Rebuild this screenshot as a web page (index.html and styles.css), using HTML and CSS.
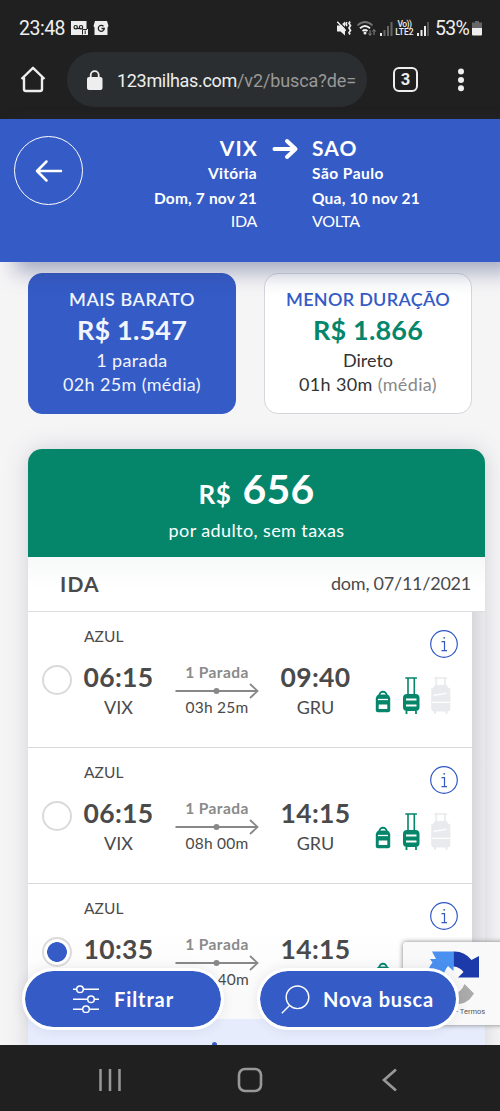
FILE: index.html
```
<!DOCTYPE html>
<html lang="pt-BR">
<head>
<meta charset="utf-8">
<title>123milhas</title>
<link rel="stylesheet" href="styles.css">
</head>
<body>
<svg width="0" height="0" class="defs">
  <symbol id="bags" viewBox="0 0 76 38">
    <g fill="#05866b">
      <path d="M4.300 19.500a3.700 3.700 0 0 1 7.400 0" fill="none" stroke="#05866b" stroke-width="1.900"/>
      <path d="M0.800 22.500Q1.400 18.500 5 18.500h6q3.600 0 4.200 4v11.700q0 2-2 2H2.800q-2 0-2-2z"/>
      <path d="M3 23.500h10" stroke="#fff" stroke-width="1.300"/>
      <path d="M3.700 28.500h8.600v4.500H3.700z" fill="#fff"/>
      <path d="M30.300 2h11.600M33 2v16M39.300 2v16" fill="none" stroke="#05866b" stroke-width="1.600"/>
      <rect x="28" y="18" width="16.500" height="17" rx="4"/>
      <path d="M31.500 35v3M41 35v3" stroke="#05866b" stroke-width="1.800"/>
      <path d="M31 23.500h10.500M31 29.500h10.500" stroke="#fff" stroke-width="1.900"/>
    </g>
    <g fill="#e9eaed">
      <path d="M59 2h13M61.300 2v8M70 2v8" fill="none" stroke="#e9eaed" stroke-width="1.700"/>
      <path d="M60 9h11.500q.5 2 3.800 3.800v19.700q0 3-3 3H59.200q-3 0-3-3V12.800Q59.500 11 60 9z"/>
      <path d="M60 35v3M71.500 35v3" stroke="#e9eaed" stroke-width="2"/>
      <path d="M58.500 19.300l13-2M57 26.300h18" stroke="#fff" stroke-width="1.300"/>
    </g>
  </symbol>
  <symbol id="route" viewBox="0 0 84 16">
    <path d="M.5 8H82M75 1l7.500 7-7.500 7" fill="none" stroke="#888" stroke-width="1.800"/>
    <circle cx="41.500" cy="8" r="3" fill="#888"/>
  </symbol>
  <symbol id="info" viewBox="0 0 28 28">
    <circle cx="14" cy="14" r="13.300" fill="none" stroke="#3158c4" stroke-width="1.200"/>
    <path d="M11.500 11.700h3v8.800M11.500 20.600h5.500" fill="none" stroke="#3158c4" stroke-width="1.200"/>
    <circle cx="14.200" cy="7.800" r=".9" fill="#3158c4"/>
  </symbol>
</svg>

<div class="status">
  <span class="clock">23:48</span>
  <svg class="notif" width="38" height="15" viewBox="0 0 38 15">
    <path d="M0 0h15.500v8H17v6H0z" fill="#eee"/>
    <path d="M5 7.500h5" stroke="#202020" stroke-width="1.200"/>
    <circle cx="4.700" cy="6.200" r="1.700" fill="none" stroke="#202020" stroke-width="1.200"/>
    <circle cx="10" cy="6.200" r="1.700" fill="none" stroke="#202020" stroke-width="1.200"/>
    <path d="M11.500 13.500V8.500H16M14.200 9.500v3.500" fill="none" stroke="#202020"/>
    <path d="M24 0h12l1.500 5-1 1.500V14h-13V6.500l-1-1.500z" fill="#eee"/>
    <path d="M32.500 5.300a3 3 0 1 0 .8 2.200h-2.800" fill="none" stroke="#202020" stroke-width="1.300"/>
  </svg>
  <svg class="signals" width="92" height="16" viewBox="0 0 92 16">
    <path d="M0 4.500h3.500L8 .5v14l-4.500-4H0z" fill="#eee"/>
    <path d="M1.500 0l9 9.500" stroke="#202020" stroke-width="1.200"/>
    <path d="M.3 .8l8.500 9" stroke="#eee" stroke-width="1.300"/>
    <path d="M9.800 1l-.8 2 1 2M13 .5l-1 2 1.500 2-1.500 2.500 1.500 2.500-1.500 2 1 2" fill="none" stroke="#eee" stroke-width="1.700"/>
    <path d="M20.500 4.500q7.500-7 15 0" fill="none" stroke="#777" stroke-width="1.700"/>
    <path d="M23 7.300q5-4.500 10 0M25.500 10q2.500-2.200 5 0" fill="none" stroke="#eee" stroke-width="1.900"/>
    <circle cx="28" cy="12" r="1.500" fill="#eee"/>
    <path d="M33 9v5M31.500 12.500l1.500 2 1.500-2M37 14V9M35.500 10.500L37 8.500l1.500 2" fill="none" stroke="#888"/>
    <path d="M44 12v3" stroke="#eee" stroke-width="2"/>
    <path d="M47.500 9v6M51 5v10M54.500 1v14" stroke="#666" stroke-width="2"/>
    <path d="M81 12v3M84.500 9v6M88 5v10" stroke="#eee" stroke-width="2"/>
    <path d="M91 1v14" stroke="#666" stroke-width="1.500"/>
  </svg>
  <span class="lte"><span class="vo">Vo))</span><span>LTE2</span></span>
  <span class="pct">53%</span>
  <svg class="battery" width="10" height="15" viewBox="0 0 10 15"><path d="M3 0h4v1.500h3V8H0V1.500h3z" fill="#666"/><path d="M0 7h10v6.500q0 1-1 1H1q-1 0-1-1z" fill="#eee"/></svg>
</div>

<div class="browser">
  <svg class="home" width="26" height="27" viewBox="0 0 26 27"><path d="M1.500 13L13 1.800 24.500 13M4 11.500V23q0 2 2 2h14q2 0 2-2V11.500" fill="none" stroke="#eee" stroke-width="2.400" stroke-linejoin="round"/></svg>
  <div class="address">
    <svg width="16" height="20" viewBox="0 0 16 20"><rect y="7" width="15.500" height="13" rx="2" fill="#eee"/><path d="M3.700 8V5.200a4 4 0 0 1 8 0V8" fill="none" stroke="#eee" stroke-width="1.800"/></svg>
    <span class="url"><span class="host">123milhas.com</span><span class="path">/v2/busca?de=</span></span>
  </div>
  <span class="tabs">3</span>
  <svg class="dots" width="8" height="24" viewBox="0 0 8 24" fill="#eee"><circle cx="4" cy="3.500" r="3"/><circle cx="4" cy="12" r="3"/><circle cx="4" cy="20.300" r="3"/></svg>
</div>

<header class="trip">
  <span class="back"><svg width="28" height="24" viewBox="0 0 28 24"><path d="M26 12H2M11.500 2.500L2 12l9.500 9.500" fill="none" stroke="#fff" stroke-width="2.500" stroke-linecap="round" stroke-linejoin="round"/></svg></span>
  <div class="end from">
    <strong class="code">VIX</strong><b>Vitória</b><b class="day from-day">Dom, 7 nov 21</b><span class="way">IDA</span>
  </div>
  <svg class="to" width="27" height="22" viewBox="0 0 27 22"><path d="M2.500 11H22M15 3l8.500 8-8.500 8" fill="none" stroke="#fff" stroke-width="4" stroke-linecap="round" stroke-linejoin="round"/></svg>
  <div class="end">
    <strong class="code">SAO</strong><b class="city">São Paulo</b><b class="day">Qua, 10 nov 21</b><span class="way">VOLTA</span>
  </div>
</header>

<main>
  <section class="options">
    <div class="option active"><span class="kind cheap">MAIS BARATO</span><strong>R$ 1.547</strong><span class="stops">1 parada</span><span class="avg">02h 25m <i>(média)</i></span></div>
    <div class="option"><span class="kind">MENOR DURAÇÃO</span><strong>R$ 1.866</strong><span class="direct">Direto</span><span class="avg">01h 30m <i>(média)</i></span></div>
  </section>

  <section class="result">
    <div class="total">
      <div class="amount"><span class="cur">R$</span><span class="num">656</span></div>
      <div class="per">por adulto, sem taxas</div>
    </div>
    <div class="leg"><strong>IDA</strong><span>dom, 07/11/2021</span></div>

    <article class="flight">
      <div class="top"><span>AZUL</span><svg width="28" height="28"><use href="#info"/></svg></div>
      <div class="line">
        <span class="radio"></span>
        <div class="stop"><strong>06:15</strong><span>VIX</span></div>
        <div class="mid"><b>1 Parada</b><svg width="84" height="16"><use href="#route"/></svg><span>03h 25m</span></div>
        <div class="stop"><strong>09:40</strong><span>GRU</span></div>
        <svg class="bags" width="76" height="38"><use href="#bags"/></svg>
      </div>
    </article>
    <article class="flight">
      <div class="top"><span>AZUL</span><svg width="28" height="28"><use href="#info"/></svg></div>
      <div class="line">
        <span class="radio"></span>
        <div class="stop"><strong>06:15</strong><span>VIX</span></div>
        <div class="mid"><b>1 Parada</b><svg width="84" height="16"><use href="#route"/></svg><span>08h 00m</span></div>
        <div class="stop"><strong>14:15</strong><span>GRU</span></div>
        <svg class="bags" width="76" height="38"><use href="#bags"/></svg>
      </div>
    </article>
    <article class="flight last">
      <div class="top"><span>AZUL</span><svg width="28" height="28"><use href="#info"/></svg></div>
      <div class="line">
        <span class="radio on"></span>
        <div class="stop"><strong>10:35</strong></div>
        <div class="mid"><b>1 Parada</b><svg width="84" height="16"><use href="#route"/></svg><span class="tail">40m</span></div>
        <div class="stop"><strong>14:15</strong></div>
        <svg class="bags" width="76" height="38"><use href="#bags"/></svg>
      </div>
    </article>
    <div class="more"><span></span></div>
  </section>

  <aside class="captcha">
    <svg width="54" height="54" viewBox="0 0 54 54">
      <path d="M5 1.500H26.500V21L21 16q-4 5-5 12H0q0-9 5.500-15.500L3 9l6 0z" fill="#4a90f0"/>
      <path d="M26.500 1.500q11-.5 18 8.500l7.500-4v21.500H31l5.500-5.500q-3.500-5-10-5.500z" fill="#1c3aa9"/>
      <path d="M37.500 34l9.500 9.500-4.500 6Q36 55 27 54V43q7 0 10.500-9z" fill="#ababab"/>
    </svg>
    <span>- Termos</span>
  </aside>

  <div class="actions">
    <span class="btn filter"><svg width="26" height="28" viewBox="0 0 26 28" fill="#355bc6" stroke="#fff" stroke-width="1.500"><path d="M0 4.300h26M0 14.200h26M0 24.200h26"/><circle cx="7" cy="4.300" r="3.300"/><circle cx="18" cy="14.200" r="3.300"/><circle cx="13" cy="24.200" r="3.300"/></svg><span>Filtrar</span></span>
    <span class="btn search"><svg width="29" height="29" viewBox="0 0 29 29" fill="none" stroke="#fff" stroke-width="1.400"><circle cx="16.500" cy="12.300" r="11.300"/><path d="M8.500 20.500L.8 28.200"/></svg><span>Nova busca</span></span>
  </div>
</main>

<nav class="system">
  <svg width="24" height="24" viewBox="0 0 24 24"><path d="M2.500 1v22M12 1v22M21.500 1v22" stroke="#989898" stroke-width="2.500"/></svg>
  <svg width="26" height="26" viewBox="0 0 26 26"><rect x="2" y="2" width="22" height="22" rx="6" fill="none" stroke="#989898" stroke-width="2.600"/></svg>
  <svg width="24" height="24" viewBox="0 0 24 24"><path d="M18 1.500L6 12l12 10.500" fill="none" stroke="#989898" stroke-width="2.700"/></svg>
</nav>
</body>
</html>
```
FILE: styles.css
```
* { box-sizing: border-box; }
body {
  margin: 0;
  width: 500px;
  height: 1111px;
  display: flex;
  flex-direction: column;
  overflow: hidden;
  background: #202020;
  font-family: Lato, "Open Sans", sans-serif;
  white-space: nowrap;
}
.defs { position: absolute; }
svg { flex: none; display: block; }
strong, b { font-weight: 700; }
i { font-style: normal; }

/* Status bar */
.status {
  height: 52px;
  flex: none;
  display: flex;
  align-items: center;
  padding: 5px 0 0 19px;
  position: relative;
  color: #eee;
  font: 19.5px/24px Roboto, sans-serif;
}
.clock { width: 52px; padding-top: 1px; letter-spacing: -.5px; }
.signals { margin-left: 228px; }
.lte {
  position: absolute;
  left: 394px;
  top: 20px;
  display: flex;
  flex-direction: column;
  align-items: center;
  width: 21px;
  font: 500 8.5px/8px Roboto, sans-serif;
}
.vo { letter-spacing: -.5px; }
.pct { margin-left: 6px; width: 37px; padding-top: 1px; letter-spacing: -.7px; }

/* Browser toolbar */
.browser {
  height: 68px;
  flex: none;
  display: flex;
  align-items: flex-start;
  padding-left: 20px;
}
.home { margin-top: 14px; }
.address {
  width: 300px;
  height: 55px;
  margin-left: 21px;
  padding-left: 20px;
  border-radius: 28px;
  background: #2b2e30;
  display: flex;
  align-items: center;
  gap: 14px;
  font: 18px/24px Roboto, sans-serif;
}
.url { padding-top: 2px; }
.host { color: #eee; letter-spacing: -.32px; }
.path { color: #999; letter-spacing: -.1px; }
.tabs {
  width: 25px;
  height: 25px;
  margin: 15px 0 0 26px;
  border: 2.500px solid #eee;
  border-radius: 6px;
  color: #eee;
  font: 700 16.5px/21px Roboto, sans-serif;
  text-align: center;
}
.dots { margin: 16px 0 0 39px; }

/* Trip header */
.trip {
  height: 143px;
  margin-top: -1px;
  flex: none;
  display: flex;
  align-items: flex-start;
  padding: 16px 0 0 14px;
  position: relative;
  z-index: 2;
  background: #355bc6;
  box-shadow: 15px 10px 20px rgba(50, 65, 120, .42);
  color: #fff;
}
.back {
  width: 69px;
  height: 69px;
  border: 1.500px solid #fff;
  border-radius: 50%;
  margin-top: 1px;
  display: flex;
  align-items: center;
  justify-content: center;
}
.end { display: flex; flex-direction: column; font-size: 15.5px; line-height: 25px; }
.from { width: 174px; align-items: flex-end; }
.from b { letter-spacing: .3px; }
.from .day { letter-spacing: .18px; }
.code { font-size: 21px; line-height: 26px; letter-spacing: 1.1px; margin-right: -1px; }
.city { letter-spacing: .48px; }
.day { letter-spacing: .2px; }
.way { font-size: 16px; line-height: 20px; letter-spacing: -.3px; }
.to { margin: 3px 13px 0 15px; }

/* Page */
main {
  height: 783px;
  flex: none;
  position: relative;
  overflow: hidden;
  background: #f6f5f6;
  padding: 11px 0 0 28px;
}
.options { display: flex; gap: 28px; }
.option {
  width: 208px;
  height: 141px;
  padding-top: 12px;
  border: 1px solid #d5d5dc;
  border-radius: 14px;
  background: #fff;
  display: flex;
  flex-direction: column;
  align-items: center;
  color: #333;
  font-size: 18px;
  line-height: 24px;
  letter-spacing: .36px;
}
.option strong {
  font-size: 27px;
  line-height: 36px;
  letter-spacing: .17px;
  color: #05866b;
}
.option i { color: #888; }
.kind { color: #355bc6; font-weight: 600; letter-spacing: .28px; line-height: 26px; }
.cheap { letter-spacing: .56px; }
.direct { letter-spacing: 0; }
.option.active { background: #355bc6; border-color: #355bc6; }
.option.active * { color: #f0f5ff; }

/* Result card */
.result {
  width: 457px;
  height: 610px;
  margin-top: 35px;
  border-radius: 14px 14px 0 0;
  background: linear-gradient(90deg, #fff 444px, #d8d8dc 444px, #e9e8eb 457px);
  box-shadow: 0 0 24px rgba(60, 60, 90, .2);
}
.total {
  height: 108px;
  padding-top: 15px;
  border-radius: 14px 14px 0 0;
  background: #05866b;
  color: #fff;
  text-align: center;
}
.amount { display: flex; justify-content: center; align-items: baseline; gap: 11px; height: 53px; line-height: 50px; font-weight: 700; }
.cur { font-size: 26px; letter-spacing: .5px; }
.num { font-size: 41px; letter-spacing: .2px; }
.per { font-size: 18px; line-height: 26px; letter-spacing: .4px; }
.leg {
  height: 55px;
  padding: 0 14px 2px 32px;
  border-bottom: 1px solid #ddd;
  background: linear-gradient(#f7f8f8, #fff 60%);
  display: flex;
  justify-content: space-between;
  align-items: center;
  color: #4a4a4a;
}
.leg strong { font-size: 21px; letter-spacing: 1.2px; }
.leg span { font-size: 18px; letter-spacing: -.24px; }

.flight {
  width: 444px;
  height: 136px;
  padding: 12px 14px 0;
  border-bottom: 1px solid #d8d8d8;
  background: #fff;
  color: #4a4a4a;
}
.flight.last { border: 0; background: linear-gradient(#fff 30%, #f9f9fa); height: 135px; }
.top {
  height: 28px;
  padding-left: 42px;
  display: flex;
  justify-content: space-between;
  font-size: 15.5px;
  line-height: 24px;
  letter-spacing: .1px;
}
.top svg { margin-top: 6px; }
.line { display: flex; align-items: flex-start; padding-top: 10px; }
.radio {
  width: 30px;
  height: 30px;
  margin: 3px 12px 0 0;
  border: 2.500px solid #dadada;
  border-radius: 50%;
}
.radio.on { background: radial-gradient(circle, #355bc6 9.500px, #fff 10.200px); }
.stop { width: 69px; display: flex; flex-direction: column; align-items: center; }
.stop strong { font-size: 26.5px; line-height: 30px; letter-spacing: .34px; }
.stop span { font-size: 18px; line-height: 30px; }
.mid { width: 84px; margin: 0 22px; display: flex; flex-direction: column; align-items: center; font-size: 15.5px; line-height: 20px; letter-spacing: .24px; }
.mid b { color: #8a8a8a; letter-spacing: .4px; }
.mid svg { margin: 1px 0 -2px; }
.mid span { letter-spacing: .24px; }
.mid .tail { align-self: flex-end; padding-right: 10px; }
.bags { margin: 14px 0 0 25px; }
.more { height: 26px; background: #e6ecfc; display: flex; align-items: flex-end; }
.more span { width: 5px; height: 3px; margin-left: 184px; border-radius: 3px 3px 0 0; background: #355bc6; }

/* Floating elements */
.captcha {
  position: absolute;
  left: 403px;
  top: 680px;
  width: 110px;
  height: 83px;
  padding: 8px 0 0 24px;
  border-radius: 3px;
  background: #f9f9f9;
  box-shadow: 0 0 5px #808080;
  color: #555;
  font: 7.5px/16px Roboto, sans-serif;
}
.captcha span { display: block; padding-left: 29px; }
.actions { position: absolute; left: 22px; top: 706px; display: flex; gap: 33px; }
.btn {
  width: 202px;
  height: 62px;
  border: 3px solid #fff;
  border-radius: 32px;
  background: #355bc6 padding-box;
  box-shadow: 0 0 12px rgba(60, 60, 90, .1);
  display: flex;
  align-items: center;
  color: #fff;
  font-size: 20px;
  font-weight: 700;
}
.filter { padding-left: 48px; gap: 15px; letter-spacing: .9px; }
.search { padding-left: 21px; gap: 13px; letter-spacing: .82px; }

/* System navigation */
.system {
  height: 67px;
  flex: none;
  padding: 2px 98px 0;
  display: flex;
  justify-content: space-between;
  align-items: center;
  background: #202020;
}
```
